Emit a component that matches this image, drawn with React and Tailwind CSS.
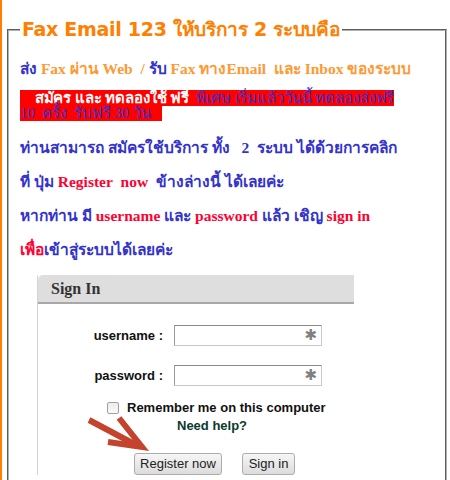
const blue = 'text-[#3333cc]';
const red = 'text-[#ff0033]';

const Arrow = () => (
  <svg
    className="absolute left-[48px] top-[138px]"
    width="66"
    height="44"
    viewBox="0 0 66 44"
    fill="none"
  >
    <line x1="3" y1="7" x2="52" y2="33" stroke="#c3432c" strokeWidth="6" />
    <polyline
      points="33,5 56,34 22,29"
      stroke="#c3432c"
      strokeWidth="6"
      strokeLinejoin="miter"
    />
  </svg>
);

const Field = ({ label }) => (
  <div className="flex items-center">
    <label className="w-[125px] text-right text-[13px] font-bold text-[#111] font-['Liberation_Sans',sans-serif]">
      {label}
    </label>
    <div className="ml-[11px] flex h-[21px] w-[148px] items-center justify-end border border-[#c8c8c8] border-t-[#8a8a8a] border-l-[#9a9a9a] bg-white pr-[4px]">
      <span className="text-[15px] font-bold leading-none text-[#808080] font-['DejaVu_Sans',sans-serif]">✱</span>
    </div>
  </div>
);

export default function App() {
  return (
    <div className="min-h-screen border-l-2 border-[#ff7f00] bg-white pl-[5px] pr-[3px] pt-[18px]">
      <fieldset className="min-h-[480px] border-2 border-[#b0b0b0] [border-style:groove] px-[11px] pb-4">
        <legend className="px-[2px] text-[19px] font-bold leading-[23px] tracking-[-0.3px] text-[#ff8000] font-['DejaVu_Sans',sans-serif]">
          Fax Email 123 ให้บริการ 2 ระบบคือ
        </legend>

        <div className="font-['Liberation_Serif',serif] text-[15.5px] font-bold">
          <p className="mt-[18px] leading-[20px] text-[#ff9933]">
            <span className={blue}>ส่ง</span> Fax ผ่าน Web&nbsp; / <span className={blue}>รับ</span> Fax ทางEmail&nbsp; และ Inbox ของระบบ
          </p>

          <p className="mt-[12px] text-[15px] leading-[15px] tracking-[-0.1px]">
            <span className="bg-[#ff0000] font-normal">
              <span className="font-bold text-white">&nbsp;&nbsp;&nbsp;&nbsp;สมัคร และ ทดลองใช้ ฟรี</span>
              <span className={blue}>&nbsp; พิเศษ เริ่มแล้ววันนี้ ทดลองส่งฟรี</span>
              <br />
              <span className={blue}>10&nbsp; ครั้ง&nbsp; รับฟรี 30 วัน&nbsp;&nbsp;&nbsp;</span>
            </span>
          </p>

          <div className={`mt-[17px] flex flex-col gap-[14px] leading-[20px] ${blue}`}>
            <p>ท่านสามารถ สมัครใช้บริการ ทั้ง&nbsp;&nbsp; 2&nbsp; ระบบ ได้ด้วยการคลิก</p>
            <p>
              ที่ ปุ่ม <span className={red}>Register&nbsp; now</span>&nbsp; ข้างล่างนี้ ได้เลยค่ะ
            </p>
            <p>
              หากท่าน มี <span className={red}>username</span> และ <span className={red}>password</span> แล้ว เชิญ{' '}
              <span className={red}>sign in</span>
            </p>
            <p>
              <span className={red}>เพื่อ</span>เข้าสู่ระบบได้เลยค่ะ
            </p>
          </div>
        </div>

        {/* Sign in box */}
        <div className="relative ml-[17px] mt-[15px] w-[317px] border-l border-[#d4d4d4]">
          <div className="flex h-[29px] items-center rounded-tl-[5px] border-b-2 border-[#a8a8a8] bg-[#dedede] pl-[13px]">
            <span className="text-[16px] font-bold text-[#333] font-['Liberation_Serif',serif]">Sign In</span>
          </div>

          <div className="flex flex-col gap-[19px] pt-[21px]">
            <Field label="username :" />
            <Field label="password :" />
          </div>

          <div className="mt-[12px] flex items-center pl-[69px]">
            <span className="h-[12px] w-[12px] rounded-[2px] border border-[#a0a0a0] bg-gradient-to-b from-[#ececec] to-[#fafafa]" />
            <span className="ml-[8px] text-[13px] font-bold text-[#111] font-['Liberation_Sans',sans-serif]">
              Remember me on this computer
            </span>
          </div>
          <div className="-mt-[2px] pl-[139px] text-[13px] font-bold text-[#0c3a2c] font-['Liberation_Sans',sans-serif]">
            Need help?
          </div>

          <div className="mt-[18px] flex gap-[20px] pl-[96px] font-['Liberation_Sans',sans-serif] text-[13px] text-[#222]">
            <button className="h-[22px] w-[88px] rounded-[3px] border border-[#acacac] bg-gradient-to-b from-[#f6f6f6] to-[#dcdcdc]">
              Register now
            </button>
            <button className="h-[22px] w-[53px] rounded-[3px] border border-[#acacac] bg-gradient-to-b from-[#f6f6f6] to-[#dcdcdc]">
              Sign in
            </button>
          </div>

          <Arrow />
        </div>
      </fieldset>
    </div>
  );
}
